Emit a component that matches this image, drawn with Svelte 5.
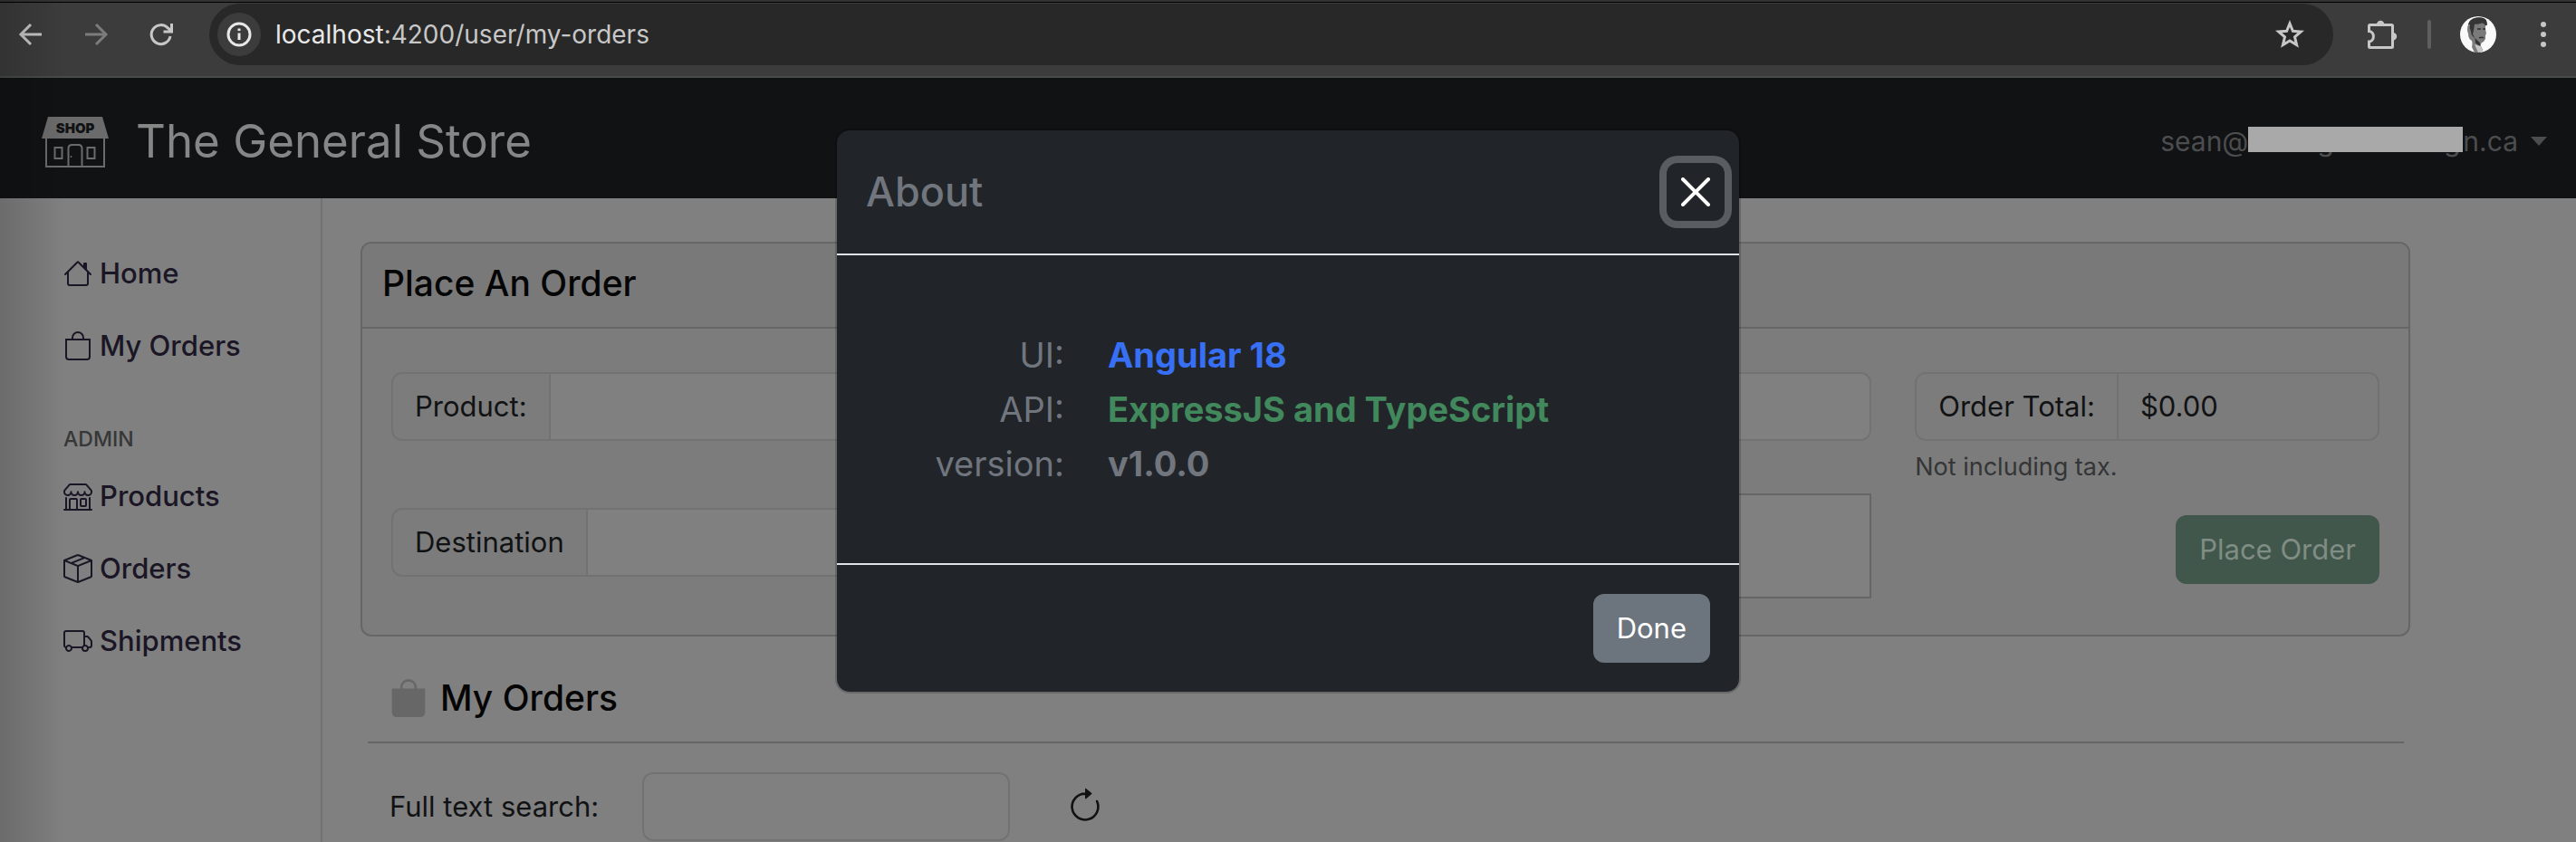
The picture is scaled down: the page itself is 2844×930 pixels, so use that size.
<script>
  const icons = {
    house: 'M8.707 1.5a1 1 0 0 0-1.414 0L.646 8.146a.5.5 0 0 0 .708.708L2 8.207V13.5A1.5 1.5 0 0 0 3.5 15h9a1.5 1.5 0 0 0 1.5-1.5V8.207l.646.647a.5.5 0 0 0 .708-.708L13 5.793V2.5a.5.5 0 0 0-.5-.5h-1a.5.5 0 0 0-.5.5v1.293zM13 7.207V13.5a.5.5 0 0 1-.5.5h-9a.5.5 0 0 1-.5-.5V7.207l5-5z',
    bag: 'M8 1a2.5 2.5 0 0 1 2.5 2.5V4h-5v-.5A2.5 2.5 0 0 1 8 1m3.5 3v-.5a3.5 3.5 0 1 0-7 0V4H1v10a2 2 0 0 0 2 2h10a2 2 0 0 0 2-2V4zM2 5h12v9a1 1 0 0 1-1 1H3a1 1 0 0 1-1-1z',
    bagFill: 'M8 1a2.5 2.5 0 0 1 2.5 2.5V4h-5v-.5A2.5 2.5 0 0 1 8 1m3.5 3v-.5a3.5 3.5 0 1 0-7 0V4H1v10a2 2 0 0 0 2 2h10a2 2 0 0 0 2-2V4z',
    shop: 'M2.97 1.35A1 1 0 0 1 3.73 1h8.54a1 1 0 0 1 .76.35l2.609 3.044A1.5 1.5 0 0 1 16 5.37v.255a2.375 2.375 0 0 1-4.25 1.458A2.37 2.37 0 0 1 9.875 8 2.37 2.37 0 0 1 8 7.083 2.37 2.37 0 0 1 6.125 8a2.37 2.37 0 0 1-1.875-.917A2.375 2.375 0 0 1 0 5.625V5.37a1.5 1.5 0 0 1 .361-.976zm1.78 4.275a1.375 1.375 0 0 0 2.75 0 .5.5 0 0 1 1 0 1.375 1.375 0 0 0 2.75 0 .5.5 0 0 1 1 0 1.375 1.375 0 1 0 2.75 0V5.37a.5.5 0 0 0-.12-.325L12.27 2H3.73L1.12 5.045A.5.5 0 0 0 1 5.37v.255a1.375 1.375 0 0 0 2.75 0 .5.5 0 0 1 1 0M1.5 8.5A.5.5 0 0 1 2 9v6h1v-5a1 1 0 0 1 1-1h3a1 1 0 0 1 1 1v5h6V9a.5.5 0 0 1 1 0v6h.5a.5.5 0 0 1 0 1H.5a.5.5 0 0 1 0-1H1V9a.5.5 0 0 1 .5-.5M4 15h3v-5H4zm5-5a1 1 0 0 1 1-1h2a1 1 0 0 1 1 1v3a1 1 0 0 1-1 1h-2a1 1 0 0 1-1-1zm3 0h-2v3h2z',
    box: 'M8.186 1.113a.5.5 0 0 0-.372 0L1.846 3.5l2.404.961L10.404 2zm3.564 1.426L5.596 5 8 5.961 14.154 3.5zm3.25 1.7-6.5 2.6v7.922l6.5-2.6V4.24zM7.5 14.762V6.838L1 4.239v7.923zM7.443.184a1.5 1.5 0 0 1 1.114 0l7.129 2.852A.5.5 0 0 1 16 3.5v8.662a1 1 0 0 1-.629.928l-7.185 2.874a.5.5 0 0 1-.372 0L.63 13.09a1 1 0 0 1-.63-.928V3.5a.5.5 0 0 1 .314-.464z',
    truck: 'M0 3.5A1.5 1.5 0 0 1 1.5 2h9A1.5 1.5 0 0 1 12 3.5V5h1.02a1.5 1.5 0 0 1 1.17.563l1.481 1.85a1.5 1.5 0 0 1 .329.938V10.5a1.5 1.5 0 0 1-1.5 1.5H14a2 2 0 1 1-4 0H5a2 2 0 1 1-3.998-.085A1.5 1.5 0 0 1 0 10.5zm1.294 7.456A2 2 0 0 1 4.732 11h5.536a2 2 0 0 1 .732-.732V3.5a.5.5 0 0 0-.5-.5h-9a.5.5 0 0 0-.5.5v7a.5.5 0 0 0 .294.456M12 10a2 2 0 0 1 1.732 1h.768a.5.5 0 0 0 .5-.5V8.35a.5.5 0 0 0-.11-.312l-1.48-1.85A.5.5 0 0 0 13.02 6H12zm-9 1a1 1 0 1 0 0 2 1 1 0 0 0 0-2m9 0a1 1 0 1 0 0 2 1 1 0 0 0 0-2',
    refresh: 'M8 3a5 5 0 1 0 4.546 2.914.5.5 0 0 1 .908-.417A6 6 0 1 1 8 2zM8 4.466V.534a.25.25 0 0 1 .41-.192l2.36 1.966c.12.1.12.284 0 .384L8.41 4.658A.25.25 0 0 1 8 4.466',
    close: 'M.293.293a1 1 0 0 1 1.414 0L8 6.586 14.293.293a1 1 0 1 1 1.414 1.414L9.414 8l6.293 6.293a1 1 0 0 1-1.414 1.414L8 9.414l-6.293 6.293a1 1 0 0 1-1.414-1.414L6.586 8 .293 1.707a1 1 0 0 1 0-1.414'
  };

  const userLinks = [
    { icon: 'house', label: 'Home' },
    { icon: 'bag', label: 'My Orders' }
  ];
  const adminLinks = [
    { icon: 'shop', label: 'Products' },
    { icon: 'box', label: 'Orders' },
    { icon: 'truck', label: 'Shipments' }
  ];
  const about = [
    { term: 'UI:', value: 'Angular 18', tone: 'primary' },
    { term: 'API:', value: 'ExpressJS and TypeScript', tone: 'success' },
    { term: 'version:', value: 'v1.0.0', tone: 'muted' }
  ];

  let product = $state('');
  let destination = $state('');
  let notes = $state('');
  let query = $state('');
  let open = $state(true);
</script>

{#snippet icon(name, cls)}
  <svg class={cls} viewBox="0 0 16 16" fill="currentColor" aria-hidden="true"><path d={icons[name]} /></svg>
{/snippet}

{#snippet link(item)}
  <li><a href="#top">{@render icon(item.icon, 'nav-icon')}<span>{item.label}</span></a></li>
{/snippet}

<div class="window">
  <div class="browser">
    <button class="tool" aria-label="Back">
      <svg viewBox="0 0 32 32"><path d="M28 16H6M16 5 5 16l11 11" /></svg>
    </button>
    <button class="tool faded" aria-label="Forward">
      <svg viewBox="0 0 32 32"><path d="M4 16h22M16 5l11 11-11 11" /></svg>
    </button>
    <button class="tool" aria-label="Reload">
      <svg viewBox="0 0 32 32"><path d="M26 18a10.5 10.5 0 1 1-2.600-9L27 12M27.500 4v9H18.500" /></svg>
    </button>
    <div class="address">
      <button class="info" aria-label="Site information">
        <svg viewBox="0 0 28 28"><circle cx="14" cy="14" r="12" /><path d="M14 12.500v7.500" /><path d="M14 7.500v2.600" /></svg>
      </button>
      <span class="url"><b>localhost</b>:4200/user/my-orders</span>
      <button class="star" aria-label="Bookmark">
        <svg viewBox="0 0 32 32"><path d="m16 4 3.400 8.300 8.900.700-6.800 5.800 2.100 8.700L16 22.900l-7.600 4.600 2.100-8.700-6.800-5.800 8.900-.700z" /></svg>
      </button>
    </div>
    <button class="ext" aria-label="Extensions">
      <svg viewBox="0 0 36 36"><path d="M4.500 7.500h24a1 1 0 0 1 1 1v23a1 1 0 0 1-1 1h-24a1 1 0 0 1-1-1v-5.500c6.500-.5 6.500-11 0-11.500V8.500a1 1 0 0 1 1-1z" /><path class="solid" d="M12 7a4.200 4.200 0 0 1 8.400 0zM30 16a4.200 4.200 0 0 1 0 8.400z" /></svg>
    </button>
    <span class="bar"></span>
    <button class="avatar" aria-label="Profile">
      <svg viewBox="0 0 40 40">
        <circle cx="20" cy="20" r="20" fill="#fafafa" />
        <path d="M9 9q1-6 9-7.500 8-1 11 3l1 4-2 1.500v4l1 5-1 2 0 4-2 3q-3 1-3 3v2l2 4-4 4-5-1-3-6q1-4 0-7-4-2-4-8-2-4 0-10" fill="#7a7a7a" />
        <path d="M9 9q1-6 9-7.500 8-1 11 3l1 5-2 1q-1-3-4-3-5 2-8 1l-1 7-1 4q2 5 5 7l3 3v4l-5-4q0-4-1-6-4-2-4-7-2-4-1-7.500" fill="#353535" />
        <path d="M19 14h4m2 0h3" stroke="#2c2c2c" stroke-width="1.500" />
        <path d="M21 24q3-1.500 5 0" fill="none" stroke="#333" stroke-width="1.500" />
        <path d="m16 31 4 9 5-1-2-6z" fill="#c4c4c4" />
      </svg>
    </button>
    <button class="menu" aria-label="Menu">
      <svg viewBox="0 0 8 32"><circle cx="4" cy="5" r="3" /><circle cx="4" cy="16" r="3" /><circle cx="4" cy="27" r="3" /></svg>
    </button>
  </div>

  <div class="app" id="top">
    <header>
      <a class="brand" href="#top">
        <svg class="logo" viewBox="0 0 74 58" aria-hidden="true">
          <path d="M7 2h60l7 24H0z" fill="#6b6b6b" />
          <path d="M5 26v31h64V26" fill="none" stroke="#6b6b6b" stroke-width="2" />
          <path d="M14.500 36h8v12h-8zM50.500 36h8v12h-8zM29.500 57V37q0-4 4-4h7q4 0 4 4v20" fill="none" stroke="#6b6b6b" stroke-width="2" />
          <circle cx="32.500" cy="46" r="1" fill="#6b6b6b" />
          <text x="37" y="20" text-anchor="middle">SHOP</text>
        </svg>
        <span>The General Store</span>
      </a>
      <button class="account" aria-label="Account menu">
        <span>sean@</span><span class="masked"><span>g</span><span>g</span><i></i></span><span>n.ca</span>
        <svg viewBox="0 0 18 10"><path d="M0 0h18L9 10z" /></svg>
      </button>
    </header>

    <div class="columns">
      <nav>
        <ul>{#each userLinks as item}{@render link(item)}{/each}</ul>
        <h6>ADMIN</h6>
        <ul>{#each adminLinks as item}{@render link(item)}{/each}</ul>
      </nav>

      <main>
        <section class="card">
          <h2>Place An Order</h2>
          <form class="order" onsubmit={(e) => e.preventDefault()}>
            <div class="fields">
              <div class="group">
                <label for="product">Product:</label>
                <input id="product" type="text" bind:value={product} />
              </div>
              <div class="split">
                <div class="group">
                  <label for="destination">Destination</label>
                  <input id="destination" type="text" bind:value={destination} />
                </div>
                <textarea aria-label="Address" bind:value={notes}></textarea>
              </div>
            </div>
            <div class="summary">
              <div class="group">
                <span class="cell">Order Total:</span>
                <output>$0.00</output>
              </div>
              <p>Not including tax.</p>
              <button class="place" type="submit" disabled>Place Order</button>
            </div>
          </form>
        </section>

        <section class="orders">
          <h3>{@render icon('bagFill', 'heading-icon')}My Orders</h3>
          <div class="search">
            <label for="search">Full text search:</label>
            <input id="search" type="text" bind:value={query} />
            <button aria-label="Refresh">{@render icon('refresh', 'heading-icon')}</button>
          </div>
        </section>
      </main>
    </div>
  </div>

  {#if open}
    <div class="modal" role="dialog" aria-labelledby="about-title">
      <div class="modal-head">
        <h4 id="about-title">About</h4>
        <button class="close" aria-label="Close" onclick={() => (open = false)}>{@render icon('close', 'nav-icon')}</button>
      </div>
      <dl>
        {#each about as row}
          <dt>{row.term}</dt>
          <dd class={row.tone}>{row.value}</dd>
        {/each}
      </dl>
      <div class="modal-foot">
        <button class="done" onclick={() => (open = false)}>Done</button>
      </div>
    </div>
  {/if}
</div>

<style>
  :global(body) {
    margin: 0;
    background: #808080;
  }
  * {
    box-sizing: border-box;
  }
  .window {
    position: relative;
    min-height: 100vh;
    display: flex;
    flex-direction: column;
    overflow: hidden;
    font: 400 31px/48px Inter, "Liberation Sans", sans-serif;
    color: #111213;
  }
  .window::after {
    content: "";
    position: absolute;
    inset: 0 auto 0 0;
    width: 72px;
    background: linear-gradient(90deg, rgba(0, 0, 0, 0.16), rgba(0, 0, 0, 0));
    pointer-events: none;
  }
  button, input, textarea {
    font: inherit;
    color: inherit;
    border: 0;
    padding: 0;
    margin: 0;
    background: none;
  }
  h2, h3, h4, h6, p, ul, dl, dd {
    margin: 0;
    padding: 0;
    font-weight: inherit;
  }
  svg {
    display: block;
    flex: none;
  }

  .browser {
    display: flex;
    align-items: center;
    height: 86px;
    padding: 4px 32px 14px 18px;
    background: linear-gradient(#333 2px, #000 2px, #000 3px, #3c3c3c 3px, #3c3c3c 84px, #484b4a 84px);
  }
  .browser svg {
    fill: none;
    stroke: #c7c7c7;
    stroke-width: 3;
  }
  .tool {
    width: 32px;
    margin-right: 40px;
  }
  .browser .faded svg {
    stroke: #7c7c7c;
  }
  .address {
    flex: 1;
    display: flex;
    align-items: center;
    height: 68px;
    margin: 0 36px 0 -3px;
    padding: 0 32px 0 9px;
    border-radius: 34px;
    background: #282828;
  }
  .info {
    display: grid;
    place-items: center;
    width: 48px;
    height: 48px;
    border-radius: 50%;
    background: #3c3c3c;
  }
  .browser .info svg {
    width: 28px;
    stroke: #e8e8e8;
  }
  .url {
    flex: 1;
    margin-left: 16px;
    font-size: 28px;
    color: #c7c7c7;
  }
  .url b {
    font-weight: 400;
    color: #e8e8e8;
  }
  .star {
    width: 32px;
  }
  .ext {
    width: 36px;
  }
  .browser .solid {
    fill: #c7c7c7;
    stroke: none;
  }
  .bar {
    width: 4px;
    height: 32px;
    margin: 0 32px;
    border-radius: 2px;
    background: #5f5f5f;
  }
  .avatar {
    width: 40px;
  }
  .browser .avatar svg {
    stroke: none;
  }
  .menu {
    width: 8px;
    margin-left: 48px;
  }
  .browser .menu svg {
    fill: #c7c7c7;
    stroke: none;
  }

  .app {
    flex: 1;
    display: flex;
    flex-direction: column;
    background: #808080;
  }
  header {
    display: flex;
    align-items: center;
    justify-content: space-between;
    height: 133px;
    padding: 6px 32px 0 46px;
    background: #111214;
  }
  .brand {
    display: flex;
    align-items: center;
    gap: 30px;
    font-size: 51px;
    color: #868686;
    text-decoration: none;
  }
  .logo {
    width: 74px;
  }
  .logo text {
    font: 900 15px Inter, sans-serif;
    fill: #111214;
  }
  .account {
    display: flex;
    align-items: center;
    font-size: 30px;
    color: #4c4d4f;
  }
  .account svg {
    width: 18px;
    margin-left: 14px;
    fill: #4c4d4f;
  }
  .masked {
    position: relative;
    display: flex;
    justify-content: space-between;
    width: 237px;
    padding: 0 3px 0 76px;
  }
  .masked i {
    position: absolute;
    inset: 8px 0 12px;
    background: #a9a9a9;
  }

  .columns {
    flex: 1;
    display: flex;
  }
  nav {
    flex: none;
    width: 356px;
    padding: 43px 0 0 70px;
    border-right: 2px solid #727272;
    font-weight: 500;
    color: #1a1625;
  }
  ul {
    list-style: none;
  }
  nav a {
    display: flex;
    align-items: center;
    gap: 8px;
    padding: 16px 0;
    color: inherit;
    text-decoration: none;
  }
  .nav-icon {
    width: 32px;
    height: 32px;
  }
  h6 {
    padding: 47px 0 7px;
    font-size: 23px;
    line-height: 32px;
    font-weight: 500;
    color: #363737;
  }

  main {
    flex: 1;
    padding: 48px 183px 0 42px;
  }
  .card {
    border: 2px solid #666;
    border-radius: 12px;
    background: #7c7c7c;
  }
  h2, h3 {
    font-size: 39px;
    font-weight: 500;
    color: #050505;
  }
  h2 {
    padding: 20px 22px 24px;
    border-bottom: 2px solid #666;
    border-radius: 10px 10px 0 0;
    background: #797979;
  }
  .order {
    display: grid;
    grid-template-columns: repeat(12, 1fr);
    column-gap: 48px;
    padding: 48px 32px 40px;
  }
  .fields {
    grid-column: span 9;
  }
  .summary {
    grid-column: span 3;
    display: flex;
    flex-direction: column;
  }
  .group {
    display: flex;
    height: 76px;
    border: 2px solid #727272;
    border-radius: 12px;
    overflow: hidden;
  }
  .group label, .cell {
    padding: 12px 24px;
    border-right: 2px solid #727272;
  }
  .group input {
    flex: 1;
    min-width: 0;
    padding: 0 24px;
    background: #808080;
  }
  output {
    padding: 12px 24px;
  }
  .split {
    display: grid;
    grid-template-columns: 1fr 1fr;
    gap: 48px;
    align-items: start;
    margin-top: 58px;
  }
  .split .group {
    margin-top: 16px;
  }
  textarea {
    height: 116px;
    border: 2px solid #666;
    background: #808080;
    resize: none;
  }
  .summary p {
    padding: 8px 0;
    font-size: 27px;
    line-height: 42px;
    color: #343536;
  }
  .place {
    align-self: flex-end;
    height: 76px;
    margin-top: 24px;
    padding: 0 26px;
    border-radius: 12px;
    background: #41574b;
    color: #808d84;
  }

  .orders {
    padding: 44px 7px 0 8px;
  }
  h3 {
    display: flex;
    align-items: center;
    gap: 14px;
    padding: 0 24px 24px;
    border-bottom: 2px solid #666;
  }
  .heading-icon {
    width: 42px;
    height: 42px;
  }
  h3 .heading-icon {
    color: #676767;
  }
  .search {
    display: flex;
    align-items: center;
    gap: 48px;
    padding: 32px 24px 0;
  }
  .search input {
    width: 406px;
    height: 76px;
    padding: 0 24px;
    border: 2px solid #727272;
    border-radius: 12px;
  }
  .search button {
    padding: 0 14px;
  }

  .modal {
    position: absolute;
    top: 142px;
    left: 50%;
    width: 1000px;
    max-width: 100%;
    transform: translateX(-50%);
    border: 2px solid rgba(0, 0, 0, 0.175);
    border-radius: 16px;
    background: #212529;
    background-clip: padding-box;
    color: #70757e;
  }
  .modal-head {
    display: flex;
    align-items: center;
    justify-content: space-between;
    padding: 32px 16px 32px 32px;
    border-bottom: 2px solid #dee2e6;
  }
  h4 {
    font-size: 45px;
    line-height: 72px;
    font-weight: 500;
  }
  .close {
    display: grid;
    place-items: center;
    width: 64px;
    height: 64px;
    border-radius: 12px;
    box-shadow: 0 0 0 8px #595c60;
    color: #fff;
  }
  dl {
    display: grid;
    grid-template-columns: 251px 1fr;
    column-gap: 48px;
    padding: 80px 0;
    font-size: 38px;
    line-height: 60px;
  }
  dt {
    text-align: right;
  }
  dd {
    font-weight: 700;
  }
  .primary {
    color: #376ff5;
  }
  .success {
    color: #41885c;
  }
  .modal-foot {
    display: flex;
    justify-content: flex-end;
    padding: 32px;
    border-top: 2px solid #dee2e6;
  }
  .done {
    height: 76px;
    padding: 0 26px;
    border-radius: 12px;
    background: #6c757d;
    color: #fff;
  }
</style>
